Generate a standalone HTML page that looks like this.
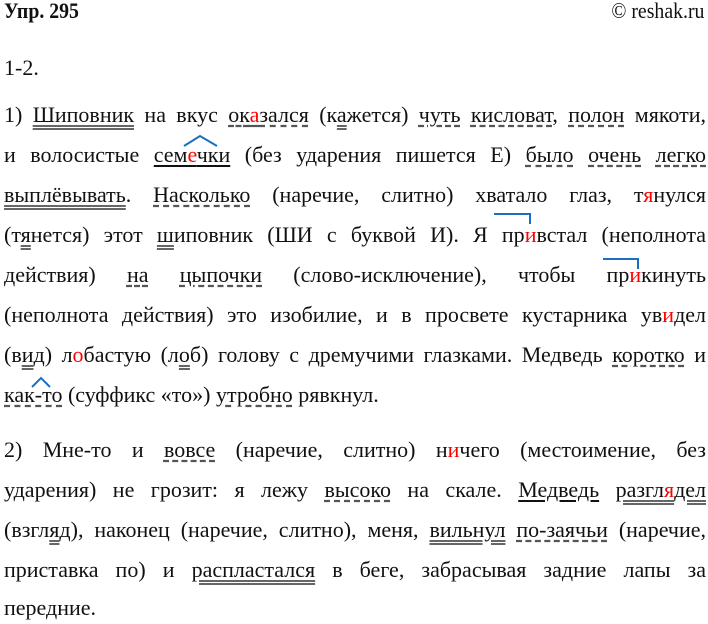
<!DOCTYPE html>
<html><head><meta charset="utf-8"><style>
body{margin:0;width:708px;height:624px;background:#fff;overflow:hidden;position:relative;font-family:"Liberation Serif",serif;font-size:22px;color:#111}
.l{position:absolute;left:4px;width:702px;height:24px;line-height:24px;white-space:nowrap;text-align:justify;text-align-last:justify;font-family:"Liberation Serif",serif}
.n{text-align-last:left}
.u{text-decoration:underline;text-underline-offset:3px}
.d{text-decoration:underline double;text-underline-offset:3px;text-decoration-color:#666}
.s{text-decoration:underline dashed;text-underline-offset:3px;text-decoration-color:#555}
.r{color:#f00}
.hd{position:absolute;top:-2px;font-size:22px;line-height:26px}
</style></head><body>
<div class="hd" style="left:4px;font-weight:bold;transform:scaleX(.9);transform-origin:left">Упр. 295</div>
<div class="hd" style="right:4px;transform:scaleX(.9);transform-origin:right">© reshak.ru</div>
<div class="l n" style="top:56px">1-2.</div>
<div class="l" style="top:103px">1) <span class="d">Шиповник</span> на вкус <span class="s">ок<span class="r">а</span>зался</span> (к<span class="d">а</span>жется) <span class="s">чуть</span> <span class="s">кисловат</span>, <span class="s">полон</span> мякоти,</div>
<div class="l" style="top:143px">и волосистые <span class="u">сем<span class="r">е</span>чки</span> (без ударения пишется Е) <span class="s">было</span> <span class="s">очень</span> <span class="s">легко</span></div>
<div class="l" style="top:183px"><span class="d">выплёвывать</span>. <span class="s">Насколько</span> (наречие, слитно) хватало глаз, т<span class="r">я</span>нулся</div>
<div class="l" style="top:223px">(т<span class="d">я</span>нется) этот <span class="d">ш</span>иповник (ШИ с буквой И). Я пр<span class="r">и</span>встал (неполнота</div>
<div class="l" style="top:263px">действия) <span class="s">на</span> <span class="s">цыпочки</span> (слово-исключение), чтобы пр<span class="r">и</span>кинуть</div>
<div class="l" style="top:303px">(неполнота действия) это изобилие, и в просвете кустарника ув<span class="r">и</span>дел</div>
<div class="l" style="top:343px">(в<span class="d">и</span>д) л<span class="r">о</span>бастую (л<span class="d">о</span>б) голову с дремучими глазками. Медведь <span class="s">коротко</span> и</div>
<div class="l n" style="top:383px"><span class="s">как-то</span> (суффикс «то») <span class="s">утробно</span> рявкнул.</div>
<div class="l" style="top:438px">2) Мне-то и <span class="s">вовсе</span> (наречие, слитно) н<span class="r">и</span>чего (местоимение, без</div>
<div class="l" style="top:478px">ударения) не грозит: я лежу <span class="s">высоко</span> на скале. <span class="u">Медведь</span> <span class="d">разгл<span class="r">я</span>дел</span></div>
<div class="l" style="top:518px">(взгл<span class="d">я</span>д), наконец (наречие, слитно), меня, <span class="d">вильнул</span> <span class="s">по-заячьи</span> (наречие,</div>
<div class="l" style="top:558px">приставка по) и <span class="d">распластался</span> в беге, забрасывая задние лапы за</div>
<div class="l n" style="top:596px">передние.</div>
<svg style="position:absolute;left:0;top:0" width="708" height="624">
<path d="M184 146 L200 136 L217 146" fill="none" stroke="#1a6fc4" stroke-width="2"/>
<path d="M494 214 L530 214 L530 224" fill="none" stroke="#1a6fc4" stroke-width="2"/>
<path d="M603 259 L638 259 L638 269" fill="none" stroke="#1a6fc4" stroke-width="2"/>
<path d="M32 387 L41 378 L50 387" fill="none" stroke="#1a6fc4" stroke-width="2"/>
</svg>
</body></html>
